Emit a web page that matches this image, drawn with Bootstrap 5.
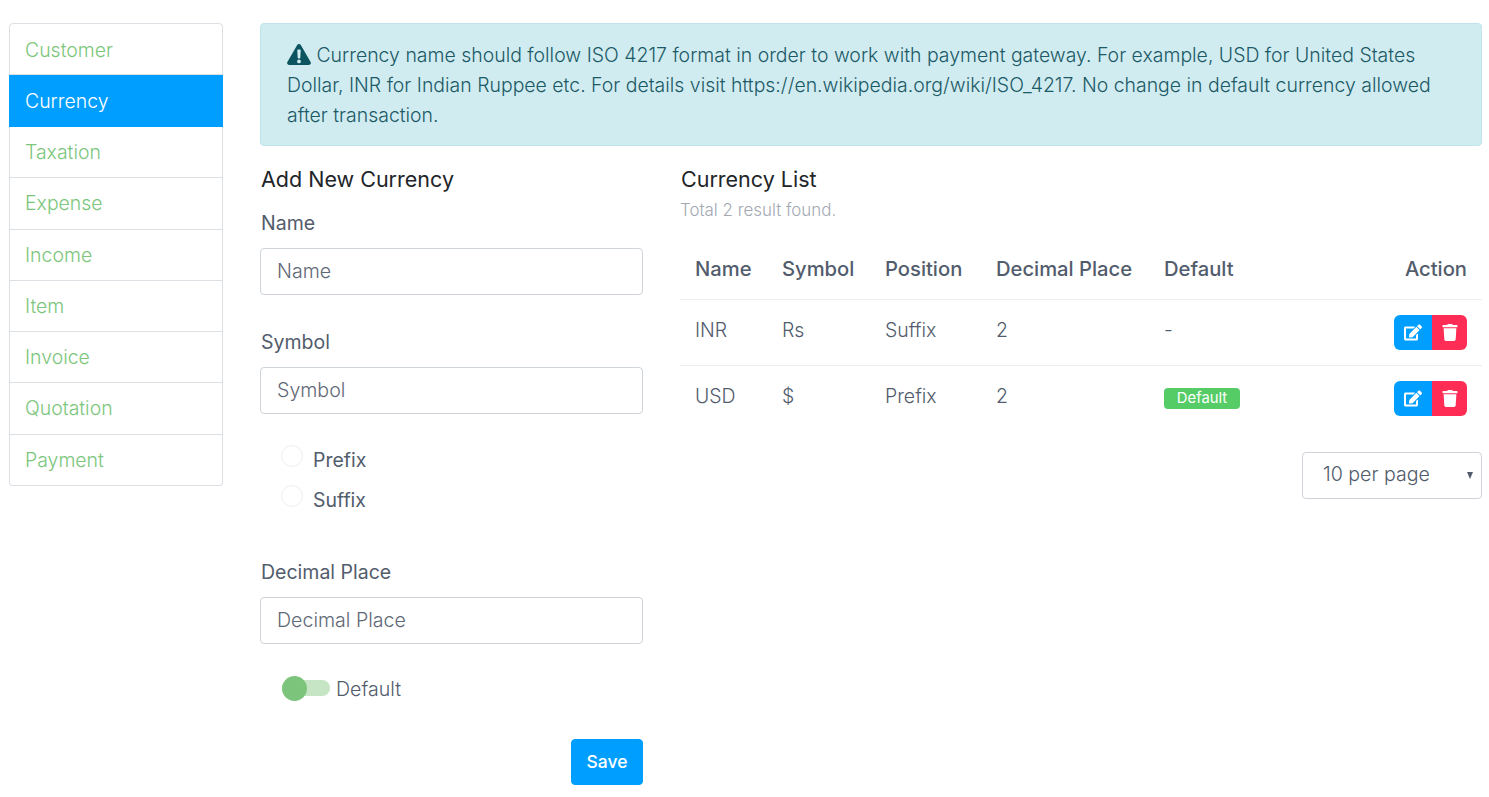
<!DOCTYPE html>
<html lang="en">
<head>
    <meta charset="UTF-8">
    <title>Currency</title>
    <link href="https://cdn.jsdelivr.net/npm/bootstrap@5.3.3/dist/css/bootstrap.min.css" rel="stylesheet">
    <script src="https://cdn.jsdelivr.net/npm/bootstrap@5.3.3/dist/js/bootstrap.bundle.min.js"></script>
    <style>
        body {
            font-family: Inter, "Liberation Sans", sans-serif;
            font-weight: 300;
            font-size: 19.45px;
            line-height: 30px;
            color: #525c6c;
            background: #fff;
        }
        .page-wrap { display: flex; padding: 23px 7px 12px 9px; }
        .side-col { width: 214px; flex: none; margin-right: 37px; }
        .main-col { flex: 1; min-width: 0; }
        .side-menu { border-radius: 4px; }
        .side-menu .list-group-item {
            height: 51.3px;
            padding: 10px 15px;
            color: #7cc67c;
            border-color: #dcdfe3;
            font-size: 19.45px;
            line-height: 30px;
        }
        .side-menu .list-group-item:first-child { height: 52px; padding-top: 11px; }
        .side-menu .list-group-item.active { height: 52px; margin-top: 0; padding-top: 10px; background: #009eff; border-color: #009eff; color: #fff; }
        .note-box {
            height: 123px;
            padding: 16px 26px 0;
            margin-bottom: 19px;
            background: #d1ecf1;
            border: 1px solid #bee5eb;
            border-radius: 4px;
            color: #1b5a66;
        }
        .note-box svg { width: 24px; height: 21px; vertical-align: -3px; }
        .left-part { width: 383px; flex: none; margin-right: 37px; }
        .right-part { flex: 1; min-width: 0; }
        .part-title { font-size: 21.5px; line-height: 30px; font-weight: 400; color: #212529; margin: -1px 0 0; padding-left: 1px; }
        .fld-label { display: block; padding-left: 1px; font-weight: 400; font-size: 19.5px; margin: 14px 0 0; line-height: 30px; }
        .fld-label.lbl-symbol { margin-top: 32px; }
        .fld-label.lbl-decimal { margin-top: 36px; }
        .fld-input.form-control {
            height: 47px;
            margin-top: 10px;
            padding: 7px 16px 9px;
            font-size: 19.6px;
            font-weight: 300;
            color: #525c6c;
            border-color: #ced4da;
            border-radius: 4px;
        }
        .fld-input::placeholder { color: #5f6876; opacity: 1; }
        .radio-list { margin-top: 27px; }
        .radio-row { display: flex; align-items: center; height: 40px; padding-left: 21px; padding-bottom: 2px; font-weight: 400; }
        .radio-dot { width: 22px; height: 22px; border: 1px solid #eceef0; border-radius: 50%; margin-right: 10px; margin-top: -8px; flex: none; }
        .switch-row { display: flex; align-items: center; padding-left: 22px; padding-bottom: 2px; height: 30px; margin-top: 31px; font-size: 19.6px; }
        .switch-track { position: relative; width: 48px; height: 16px; background: #c5e5c5; border-radius: 8px; margin-right: 6px; margin-bottom: 3px; }
        .switch-knob { position: absolute; left: 0; top: -4px; width: 25px; height: 25px; border-radius: 50%; background: #7cc47c; }
        .save-row { margin-top: 34px; }
        .save-btn.btn { width: 72px; height: 46px; background: #009eff; border-color: #009eff; color: #fff; font-weight: 500; font-size: 17.5px; border-radius: 4px; padding: 0; }
        .sub-note { font-size: 16.9px; line-height: 24px; color: #a3a9b3; margin: 4px 0 23px; }
        .cur-table { margin: 0; table-layout: fixed; --bs-table-border-color: #eceef0; }
        .cur-table th { font-weight: 500; padding: 9px 15px 15px; height: 49px; font-size: 20.2px; color: #525c6c; }
        .cur-table td { padding: 15px; height: 66px; vertical-align: top; font-size: 19.45px; color: #525c6c; }
        .cur-table th:nth-child(1) { width: 87px; }
        .cur-table th:nth-child(2) { width: 103px; }
        .cur-table th:nth-child(3) { width: 111px; }
        .cur-table th:nth-child(4) { width: 168px; }
        .cur-table th:nth-child(5) { width: 130px; }
        .cur-table tr:last-child td { border-bottom: 0; }
        .def-badge { display: inline-block; width: 76px; height: 21px; line-height: 20px; background: #55cc66; color: #fff; font-size: 14.8px; font-weight: 400; text-align: center; border-radius: 4px; vertical-align: 0; }
        .act-btn.btn { width: 38px; height: 35px; padding: 0; border: 0; display: inline-flex; align-items: center; justify-content: center; color: #fff; }
        .act-edit.btn { background: #009eff; }
        .act-del.btn { background: #ff2d55; width: 35px; margin-left: 0 !important; }
        .act-btn svg { width: 18px; height: 17px; fill: #fff; }
        .per-page.form-select {
            width: 180px;
            height: 47px;
            margin: 20px 0 0 auto;
            padding: 7px 20px 9px;
            font-size: 19.6px;
            font-weight: 300;
            color: #525c6c;
            border-color: #ced4da;
            border-radius: 4px;
            background-image: none;
        }
        .select-wrap { position: relative; }
        .select-arrow { position: absolute; right: 9px; top: 20px; width: 0; height: 0; border-left: 3.5px solid transparent; border-right: 3.5px solid transparent; border-top: 7px solid #525c6c; }
    </style>
</head>
<body>
<div class="page-wrap">
    <div class="side-col">
        <div class="list-group side-menu">
            <a href="#" class="list-group-item list-group-item-action">Customer</a>
            <a href="#" class="list-group-item list-group-item-action active">Currency</a>
            <a href="#" class="list-group-item list-group-item-action">Taxation</a>
            <a href="#" class="list-group-item list-group-item-action">Expense</a>
            <a href="#" class="list-group-item list-group-item-action">Income</a>
            <a href="#" class="list-group-item list-group-item-action">Item</a>
            <a href="#" class="list-group-item list-group-item-action">Invoice</a>
            <a href="#" class="list-group-item list-group-item-action">Quotation</a>
            <a href="#" class="list-group-item list-group-item-action">Payment</a>
        </div>
    </div>
    <div class="main-col">
        <div class="note-box">
            <svg viewBox="0 0 24 21"><path fill="#0c5460" fill-rule="evenodd" d="M12 0c.8 0 1.4.4 1.8 1.1l9.8 17c.8 1.4-.2 2.9-1.8 2.9H2.200C.6 21-.4 19.500.4 18.100l9.800-17C10.600.4 11.200 0 12 0zm-1.700 6.200.4 7.600c0 .4.4.7.8.7h1c.4 0 .8-.3.8-.7l.4-7.600c0-.5-.3-.8-.8-.8h-1.800c-.5 0-.8.3-.8.8zM12 15.500a1.900 1.900 0 1 0 0 3.800 1.900 1.900 0 0 0 0-3.800z"/></svg>
            Currency name should follow ISO 4217 format in order to work with payment gateway. For example, USD for United States Dollar, INR for Indian Ruppee etc. For details visit https://en.wikipedia.org/wiki/ISO_4217. No change in default currency allowed after transaction.
        </div>
        <div class="d-flex">
            <form class="left-part">
                <h5 class="part-title">Add New Currency</h5>
                <label class="fld-label">Name</label>
                <input type="text" class="form-control fld-input" placeholder="Name">
                <label class="fld-label lbl-symbol">Symbol</label>
                <input type="text" class="form-control fld-input" placeholder="Symbol">
                <div class="radio-list">
                    <div class="radio-row"><span class="radio-dot"></span>Prefix</div>
                    <div class="radio-row"><span class="radio-dot"></span>Suffix</div>
                </div>
                <label class="fld-label lbl-decimal">Decimal Place</label>
                <input type="text" class="form-control fld-input" placeholder="Decimal Place">
                <div class="switch-row">
                    <span class="switch-track"><span class="switch-knob"></span></span>Default
                </div>
                <div class="d-flex justify-content-end save-row">
                    <button type="button" class="btn save-btn">Save</button>
                </div>
            </form>
            <div class="right-part">
                <h5 class="part-title">Currency List</h5>
                <p class="sub-note">Total 2 result found.</p>
                <table class="table cur-table">
                    <thead>
                    <tr>
                        <th>Name</th><th>Symbol</th><th>Position</th><th>Decimal Place</th><th>Default</th><th class="text-end">Action</th>
                    </tr>
                    </thead>
                    <tbody>
                    <tr>
                        <td>INR</td><td>Rs</td><td>Suffix</td><td>2</td><td>-</td>
                        <td class="text-end text-nowrap">
                            <div class="btn-group">
                                <button type="button" class="btn act-btn act-edit"><svg viewBox="0 0 576 512"><path d="M402.600 83.200l90.200 90.200c3.800 3.800 3.800 10 0 13.800L274.400 405.600l-92.800 10.300c-12.400 1.400-22.900-9.100-21.500-21.500l10.300-92.800L388.800 83.200c3.800-3.800 10-3.800 13.800 0zm162-22.900l-48.800-48.800c-15.200-15.200-39.900-15.200-55.200 0l-35.400 35.400c-3.800 3.800-3.800 10 0 13.800l90.200 90.200c3.800 3.800 10 3.800 13.800 0l35.400-35.400c15.200-15.300 15.200-40 0-55.200zM384 346.200V448H64V128h229.800c3.200 0 6.200-1.300 8.500-3.500l40-40c7.600-7.600 2.200-20.500-8.500-20.500H48C21.500 64 0 85.500 0 112v352c0 26.500 21.500 48 48 48h352c26.500 0 48-21.500 48-48V306.200c0-10.700-12.900-16-20.500-8.500l-40 40c-2.200 2.300-3.500 5.300-3.500 8.500z"/></svg></button>
                                <button type="button" class="btn act-btn act-del"><svg viewBox="0 0 448 512"><path d="M432 32H312l-9.400-18.700A24 24 0 0 0 281.100 0H166.800a23.700 23.700 0 0 0-21.400 13.300L136 32H16A16 16 0 0 0 0 48v32a16 16 0 0 0 16 16h416a16 16 0 0 0 16-16V48a16 16 0 0 0-16-16zM53.200 467a48 48 0 0 0 47.900 45h245.800a48 48 0 0 0 47.900-45L416 128H32z"/></svg></button>
                            </div>
                        </td>
                    </tr>
                    <tr>
                        <td>USD</td><td>$</td><td>Prefix</td><td>2</td><td><span class="def-badge">Default</span></td>
                        <td class="text-end text-nowrap">
                            <div class="btn-group">
                                <button type="button" class="btn act-btn act-edit"><svg viewBox="0 0 576 512"><path d="M402.600 83.200l90.200 90.200c3.800 3.800 3.800 10 0 13.800L274.400 405.600l-92.800 10.300c-12.400 1.400-22.900-9.100-21.500-21.500l10.300-92.800L388.800 83.200c3.800-3.800 10-3.800 13.800 0zm162-22.900l-48.800-48.800c-15.200-15.200-39.900-15.200-55.200 0l-35.400 35.400c-3.800 3.800-3.800 10 0 13.800l90.200 90.200c3.800 3.800 10 3.800 13.800 0l35.400-35.400c15.200-15.300 15.200-40 0-55.200zM384 346.200V448H64V128h229.800c3.200 0 6.200-1.300 8.500-3.500l40-40c7.600-7.600 2.200-20.500-8.500-20.500H48C21.500 64 0 85.500 0 112v352c0 26.500 21.500 48 48 48h352c26.500 0 48-21.500 48-48V306.200c0-10.700-12.900-16-20.500-8.500l-40 40c-2.200 2.300-3.500 5.300-3.500 8.500z"/></svg></button>
                                <button type="button" class="btn act-btn act-del"><svg viewBox="0 0 448 512"><path d="M432 32H312l-9.400-18.700A24 24 0 0 0 281.100 0H166.800a23.700 23.700 0 0 0-21.400 13.300L136 32H16A16 16 0 0 0 0 48v32a16 16 0 0 0 16 16h416a16 16 0 0 0 16-16V48a16 16 0 0 0-16-16zM53.200 467a48 48 0 0 0 47.900 45h245.800a48 48 0 0 0 47.900-45L416 128H32z"/></svg></button>
                            </div>
                        </td>
                    </tr>
                    </tbody>
                </table>
                <div class="select-wrap">
                    <select class="form-select per-page"><option>10 per page</option></select>
                    <span class="select-arrow"></span>
                </div>
            </div>
        </div>
    </div>
</div>
</body>
</html>
